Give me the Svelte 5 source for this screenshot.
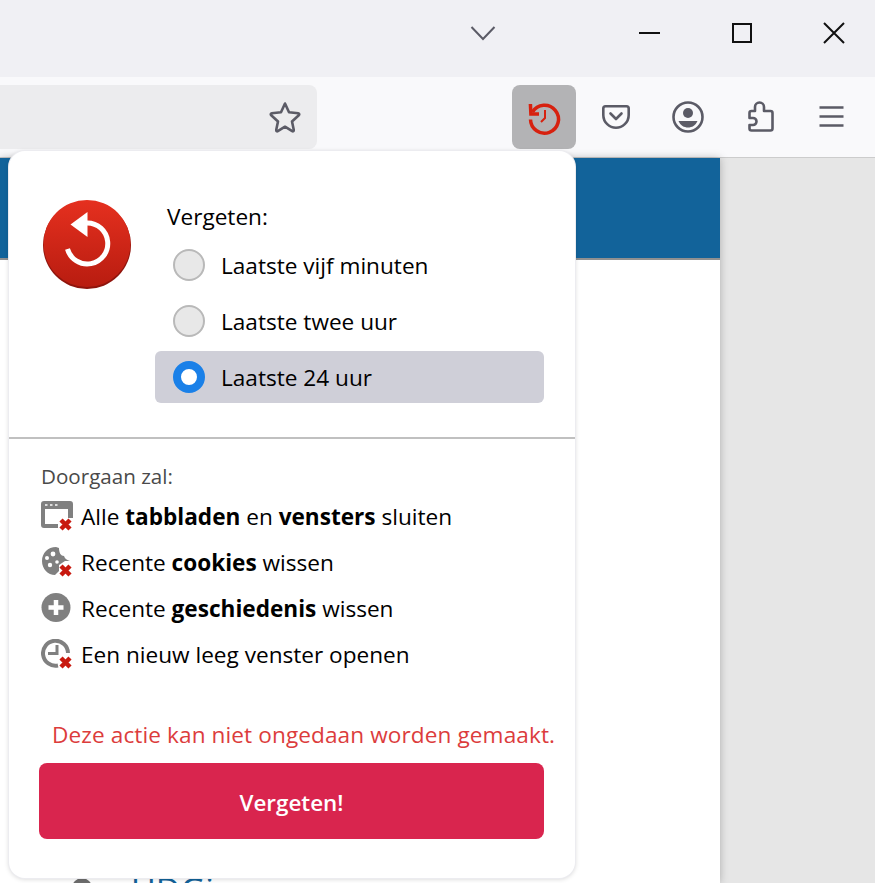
<script>
  const options = [
    { label: 'Laatste vijf minuten', checked: false },
    { label: 'Laatste twee uur', checked: false },
    { label: 'Laatste 24 uur', checked: true }
  ];
</script>

<div class="window">
  <header class="titlebar">
    <svg class="chev" viewBox="0 0 26 16"><path d="M1.5 2 L13 14 L24.5 2" /></svg>
    <div class="controls">
      <svg viewBox="0 0 92 24" class="ctl"><path d="M0 12 H21" /></svg>
      <svg viewBox="0 0 24 24" class="ctl max"><rect x="3" y="3" width="18" height="18" /></svg>
      <svg viewBox="0 0 24 24" class="ctl max"><path d="M2 2 L22 22 M22 2 L2 22" /></svg>
    </div>
  </header>

  <nav class="toolbar">
    <div class="urlbar">
      <svg class="tb" viewBox="0 0 32 32"><path class="g" d="M16 2.5 L20 11.2 L29.3 12.3 C30.6 12.5 30.4 13.6 29.8 14.2 L23 20.5 L24.8 29 C25 30.2 24 30.6 23.2 30.1 L16 25.7 L8.8 30.1 C8 30.6 7 30.2 7.2 29 L9 20.5 L2.2 14.2 C1.6 13.6 1.4 12.5 2.7 12.3 L12 11.2 Z" /></svg>
    </div>
    <div class="buttons">
      <button class="btn active" aria-label="Vergeten">
        <svg class="tb" viewBox="0 0 32 32" fill="none">
          <path class="r" d="M4.5 11 A14 14 0 1 1 2.5 18.5" />
          <path class="r" d="M2.4 3 L2.9 13 L11 13" />
          <path class="r2" d="M17 9 V17 L13 21" />
        </svg>
      </button>
      <button class="btn" aria-label="Pocket">
        <svg class="tb" viewBox="0 0 32 32"><path class="g" d="M5.500 5.300 H26.500 A2.200 2.200 0 0 1 28.700 7.500 V14 C28.700 21.500 22.500 26.700 16 26.700 C9.500 26.700 3.300 21.500 3.300 14 V7.500 A2.200 2.200 0 0 1 5.500 5.300 Z M10.500 12.500 L16 18 L21.500 12.500" /></svg>
      </button>
      <button class="btn" aria-label="Account">
        <svg class="tb" viewBox="0 0 32 32">
          <circle class="g" cx="16" cy="16" r="14.500" />
          <circle class="f" cx="16" cy="12" r="5" />
          <path class="f" d="M6.500 20 H25.500 C23.500 24.500 20 26.500 16 26.500 C12 26.500 8.500 24.500 6.500 20 Z" />
        </svg>
      </button>
      <button class="btn" aria-label="Extensies">
        <svg class="tb" viewBox="0 0 32 32"><path class="g" d="M11 10 V6 A4.500 4.500 0 0 1 20 6 V10 H26.500 A2 2 0 0 1 28.500 12 V27.500 A2 2 0 0 1 26.500 29.500 H7.500 A2 2 0 0 1 5.500 27.500 V24 H9 A3.500 3.500 0 0 0 9 17 H5.500 V12 A2 2 0 0 1 7.500 10 Z" /></svg>
      </button>
      <button class="btn" aria-label="Menu">
        <svg class="tb" viewBox="0 0 32 32"><path class="g butt" d="M3.500 6.500 H27.500 M3.500 15.500 H27.500 M3.500 24.500 H27.500" /></svg>
      </button>
    </div>
  </nav>

  <main class="page">
    <div class="content">
      <div class="banner"></div>
      <div class="below">
        <svg class="blob" viewBox="0 0 20 20"><circle cx="10" cy="10" r="10" /></svg>
        <span class="peek">UDGi</span>
      </div>
    </div>
    <div class="side"></div>
  </main>

  <section class="popup">
    <div class="top">
      <svg class="logo" viewBox="0 0 88 90">
        <defs>
          <linearGradient id="lg" x1="0" y1="0" x2="0" y2="1">
            <stop offset="0" stop-color="#e5301f" />
            <stop offset="1" stop-color="#b81c10" />
          </linearGradient>
        </defs>
        <circle cx="44" cy="45" r="44" fill="#8f140c" />
        <circle cx="44" cy="43.500" r="43.500" fill="url(#lg)" />
        <path d="M44 23 A20.500 20.500 0 1 1 24.500 49" fill="none" stroke="#fff" stroke-width="5" />
        <path d="M44.500 12 V37 L27.500 24.500 Z" fill="#fff" />
      </svg>
      <div class="form">
        <div class="legend">Vergeten:</div>
        {#each options as o}
          <div class="opt" class:on={o.checked}>
            <span class="radio"></span>
            <span>{o.label}</span>
          </div>
        {/each}
      </div>
    </div>

    <hr />

    <div class="actions">
      <div class="lead">Doorgaan zal:</div>
      <ul>
        <li>
          <svg class="ai" viewBox="0 0 32 30">
            <path class="grey" fill-rule="evenodd" d="M3 0 H29 A3 3 0 0 1 32 3 V17 H27 V8 H4 V23 H17 V27 H3 A3 3 0 0 1 0 24 V3 A3 3 0 0 1 3 0 Z" />
            <path class="dots" d="M4 4 H6.500 M9 4 H11.500 M14 4 H16.500" />
            <path class="x" d="M20 19 L29 28 M29 19 L20 28" />
          </svg>
          <span>Alle <b>tabbladen</b> en <b>vensters</b> sluiten</span>
        </li>
        <li>
          <svg class="ai" viewBox="0 0 32 30">
            <path class="grey" d="M15 0 C7 0 1 6 1 14 C1 22 7 28 14 28 L18 24 L18 18 L24 14 L29 14 C26 13 24 12 23 9 C20 9 18 6 18 1 Z" />
            <circle cx="12" cy="7" r="2.400" fill="#fff" /><circle cx="6" cy="11" r="2" fill="#fff" /><circle cx="9" cy="18" r="2.200" fill="#fff" /><circle cx="16" cy="15" r="1.800" fill="#fff" />
            <path class="x" d="M20 19 L29 28 M29 19 L20 28" />
          </svg>
          <span>Recente <b>cookies</b> wissen</span>
        </li>
        <li>
          <svg class="ai" viewBox="0 0 32 30">
            <circle class="grey" cx="15" cy="14.500" r="14.500" />
            <path d="M15 7 V22 M7.500 14.500 H22.500" stroke="#fff" stroke-width="4.500" fill="none" />
          </svg>
          <span>Recente <b>geschiedenis</b> wissen</span>
        </li>
        <li>
          <svg class="ai" viewBox="0 0 32 30">
            <path fill="none" stroke="#808080" stroke-width="4" d="M17 26.500 A12.500 12.500 0 1 1 27 14" />
            <path class="grey" d="M14.500 6 H17.500 V16 H7 V13 H14.500 Z" />
            <path class="x" d="M20 19 L29 28 M29 19 L20 28" />
          </svg>
          <span>Een nieuw leeg venster openen</span>
        </li>
      </ul>
    </div>

    <p class="warn">Deze actie kan niet ongedaan worden gemaakt.</p>
    <button class="forget">Vergeten!</button>
  </section>
</div>

<style>
  :global(body) {
    margin: 0;
    overflow: hidden;
  }
  .window {
    position: relative;
    width: 875px;
    height: 883px;
    overflow: hidden;
    display: flex;
    flex-direction: column;
    font-family: "Open Sans", "Noto Sans", sans-serif;
    background: #fff;
  }
  .titlebar {
    height: 77px;
    flex: none;
    background: #f0f0f4;
    display: flex;
    align-items: center;
    justify-content: flex-end;
  }
  .chev {
    width: 26px;
    height: 16px;
    margin-right: 143px;
    margin-bottom: 11px;
    fill: none;
    stroke: #5b5b66;
    stroke-width: 2;
  }
  .controls {
    display: flex;
    align-items: center;
    margin-bottom: 11px;
    margin-right: 29px;
    gap: 68px;
  }
  .ctl {
    width: 24px;
    height: 24px;
    fill: none;
    stroke: #111;
    stroke-width: 2;
  }
  .ctl:first-child {
    width: 92px;
    margin-right: -69px;
  }
  .toolbar {
    height: 81px;
    flex: none;
    box-sizing: border-box;
    background: #f9f9fb;
    border-bottom: 1px solid #ccc;
    display: flex;
    align-items: flex-start;
    padding-top: 8px;
  }
  .urlbar {
    width: 317px;
    height: 64px;
    box-sizing: border-box;
    background: #ececee;
    border-radius: 0 8px 8px 0;
    display: flex;
    align-items: center;
    justify-content: flex-end;
    padding-right: 16px;
  }
  .buttons {
    display: flex;
    gap: 8px;
    margin-left: 195px;
  }
  .btn {
    width: 64px;
    height: 64px;
    border: 0;
    padding: 0;
    background: none;
    border-radius: 8px;
    display: flex;
    align-items: center;
    justify-content: center;
  }
  .btn.active {
    background: #b3b3b5;
  }
  .tb {
    width: 32px;
    height: 32px;
    display: block;
    overflow: visible;
  }
  .g {
    fill: none;
    stroke: #5b5b66;
    stroke-width: 2.600;
    stroke-linejoin: round;
    stroke-linecap: round;
  }
  .g.butt {
    stroke-linecap: butt;
  }
  .f {
    fill: #5b5b66;
  }
  .r {
    fill: none;
    stroke: #d7210f;
    stroke-width: 3.500;
  }
  .r2 {
    fill: none;
    stroke: #d7210f;
    stroke-width: 2;
  }
  .page {
    flex: 1;
    display: flex;
    min-height: 0;
  }
  .content {
    width: 720px;
    flex: none;
    box-shadow: 0 0 8px rgba(0, 0, 0, 0.25);
    position: relative;
    background: #fff;
  }
  .banner {
    height: 100px;
    background: #12639a;
    border-bottom: 2px solid #909090;
  }
  .below {
    display: flex;
    align-items: flex-start;
    padding: 618px 0 0 72px;
    gap: 39px;
  }
  .blob {
    width: 20px;
    height: 20px;
    fill: #6e6e6e;
  }
  .peek {
    color: #12639a;
    font-size: 34px;
    line-height: 24px;
  }
  .side {
    flex: 1;
    background: #e6e6e6;
  }
  .popup {
    position: absolute;
    left: 9px;
    top: 151px;
    width: 566px;
    height: 727px;
    box-sizing: border-box;
    background: #fff;
    border-radius: 16px;
    box-shadow: 0 0 0 1px #ececf0, 0 1px 5px rgba(0, 0, 0, 0.18);
    color: #000;
    font-size: 22.600px;
    display: flex;
    flex-direction: column;
  }
  .top {
    display: flex;
    height: 286px;
    box-sizing: border-box;
    padding: 49px 31px 0 34px;
  }
  .logo {
    width: 88px;
    height: 90px;
    flex: none;
  }
  .form {
    flex: 1;
    margin-left: 24px;
  }
  .legend {
    line-height: 32px;
    margin: 1px 0 0 12px;
    height: 38px;
  }
  .opt {
    height: 52px;
    margin-bottom: 4px;
    border-radius: 6px;
    display: flex;
    align-items: center;
    gap: 16px;
    padding-left: 18px;
  }
  .opt.on {
    background: #cfcfd8;
  }
  .radio {
    width: 32px;
    height: 32px;
    box-sizing: border-box;
    border-radius: 50%;
    background: #e8e8e8;
    border: 2px solid #b9b9b9;
    flex: none;
  }
  .on .radio {
    background: #fff;
    border: 8px solid #1a80e8;
  }
  hr {
    margin: 0;
    border: 0;
    border-top: 2px solid #c0c0c0;
    height: 0;
  }
  .actions {
    padding: 21px 0 0 32px;
  }
  .lead {
    color: #4a4a4a;
    font-size: 20.600px;
    line-height: 32px;
    margin-bottom: 1px;
  }
  ul {
    list-style: none;
    margin: 0;
    padding: 0;
  }
  li {
    height: 46px;
    display: flex;
    align-items: center;
    gap: 8px;
  }
  b {
    font-weight: 700;
  }
  .ai {
    width: 32px;
    height: 30px;
    flex: none;
  }
  .grey {
    fill: #808080;
  }
  .dots {
    stroke: #ddd;
    stroke-width: 2;
    fill: none;
  }
  .x {
    stroke: #c8190f;
    stroke-width: 4.500;
    fill: none;
  }
  .warn {
    color: #dc3c3c;
    margin: 42px 0 0 43px;
    line-height: 32px;
    white-space: nowrap;
    letter-spacing: 0.1px;
  }
  .forget {
    margin: 12px 0 0 30px;
    width: 505px;
    height: 76px;
    padding: 2px 0 0;
    background: #d9254e;
    color: #fff;
    font: 600 22.400px "Open Sans", "Noto Sans", sans-serif;
    border: 0;
    border-radius: 8px;
  }
</style>
